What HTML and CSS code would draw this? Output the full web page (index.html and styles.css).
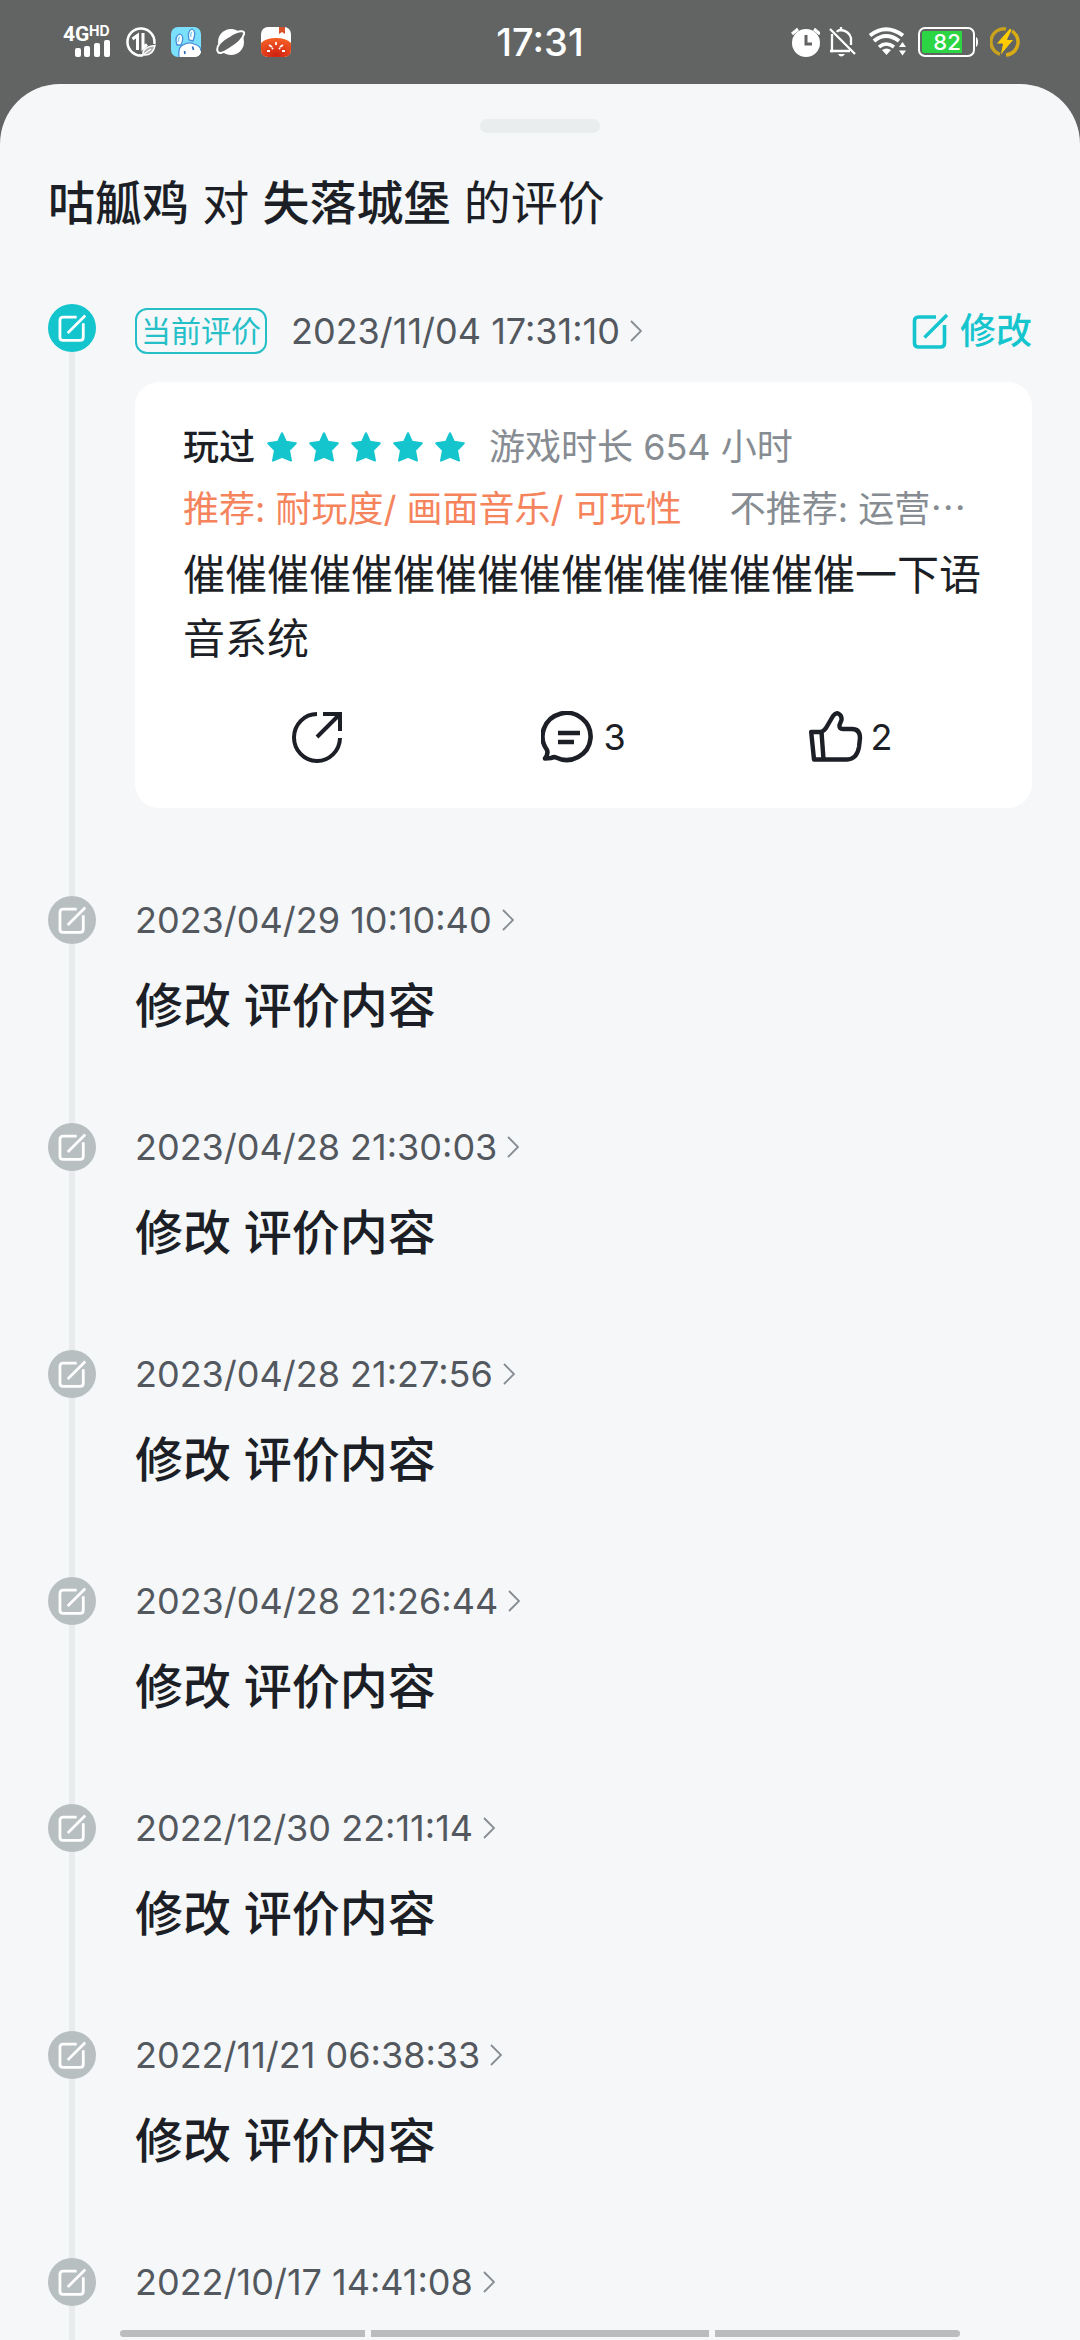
FILE: index.html
```html
<!DOCTYPE html>
<html lang="zh-CN">
<head>
    <meta charset="UTF-8">
    <meta name="viewport" content="width=device-width, initial-scale=1.0">
    <title>咕觚鸡 对 失落城堡 的评价</title>
    <link rel="stylesheet" href="styles.css">
</head>
<body>

    <!-- Shared icons -->
    <svg class="sprite" aria-hidden="true">
        <symbol id="edit" viewBox="0 0 36 36">
            <path d="M24 4H6.500Q2.500 4 2.500 8V30Q2.500 34 6.500 34H28.500Q32.500 34 32.500 30V12" fill="none" stroke="currentColor" stroke-width="3.600"/>
            <path d="M12.500 24.500 35 2" fill="none" stroke="currentColor" stroke-width="3.400"/>
        </symbol>
        <symbol id="arrow" viewBox="0 0 12 22">
            <path d="M1 1 11 11 1 21" fill="none" stroke="currentColor" stroke-width="1.800"/>
        </symbol>
        <symbol id="star" viewBox="0 0 30 30">
            <path d="M15 1.200 19 9.800 28.800 11.200 22 18.300 24 28.600 15 24.800 6 28.600 8 18.300 1.200 11.200 11 9.800Z" fill="currentColor" stroke="currentColor" stroke-width="2" stroke-linejoin="round"/>
        </symbol>
    </svg>

    <header class="status-bar">
        <div class="status-left">
            <svg width="51" height="46" viewBox="0 0 51 46" fill="#fff">
                <text class="net" x="3" y="22">4G</text>
                <text class="net-hd" x="29" y="17">HD</text>
                <rect x="15" y="29" width="6" height="9" rx="2"/>
                <rect x="24" y="27" width="6" height="11" rx="2"/>
                <rect x="34" y="24" width="6" height="14" rx="2"/>
                <rect x="44" y="21" width="6" height="17" rx="2"/>
            </svg>
            <svg width="30" height="30" viewBox="0 0 30 30" fill="none" stroke="#fff">
                <path d="M28.300 17A13.500 13.500 0 1 0 17 28.300" stroke-width="2.500"/>
                <path d="M6.500 12 11.500 8.500V23M17 6V21L21 17.500" stroke-width="3"/>
                <path d="M17 28Q16 20 29 18.500 27 29 17 28ZM18 27 25 22" fill="#aaa" stroke-width="1.500"/>
            </svg>
            <svg width="30" height="30" viewBox="0 0 30 30">
                <rect width="30" height="30" rx="7" fill="#7be0fd"/>
                <path d="M8 30Q7 21 11 18.500 17 14 23 17 30 20 30 24V25Q29 30 23 30Z" fill="#fff"/>
                <path d="M8 30Q7 21 11 18.500 17 14 23 17 30 19 30 24" fill="none" stroke="#4a8fd8" stroke-width="1.300"/>
                <path d="M6 18Q3 9 9 7 14 9 10 18ZM18 13Q16 4 21 2 26 4 22 14Z" fill="#fff" stroke="#4a8fd8" stroke-width="1.300"/>
                <path d="M7.500 15Q7 11 9 10M20 10Q19 7 21 5" fill="none" stroke="#8cd2f7" stroke-width="1.500"/>
                <path d="M13.500 24 14 27M21.500 19.500 22.500 23" stroke="#2766b8" stroke-width="1.600"/>
            </svg>
            <svg width="30" height="30" viewBox="0 0 30 30">
                <circle cx="15" cy="15" r="13" fill="#fff"/>
                <path d="M2 25C-1 20 5 13 15 8 23 3.500 29 3 28 7 27 12 20 18 13 22 7 26 3 27 2 25Z" fill="#626463" stroke="#fff" stroke-width="2"/>
            </svg>
            <svg width="30" height="30" viewBox="0 0 30 30">
                <defs>
                    <radialGradient id="tomato" cx=".5" cy=".9" r=".8">
                        <stop offset="0" stop-color="#cf2010"/>
                        <stop offset="1" stop-color="#f25a24"/>
                    </radialGradient>
                </defs>
                <rect width="30" height="30" rx="7" fill="#fff"/>
                <path d="M18 0H24V7L21 5 18 7Z" fill="#d8532b"/>
                <path d="M0 16Q5 11 15 11T30 16V23Q30 30 23 30H7Q0 30 0 23Z" fill="url(#tomato)"/>
                <path d="M15 15V18M8 18 11 20M22 18 19 20M6 24H9M24 24H21M11 21 12 22M19 21 18 22" stroke="#fff" stroke-width="1.800"/>
            </svg>
        </div>
        <span class="clock">17:31</span>
        <div class="status-right">
            <div class="alerts">
                <svg width="30" height="30" viewBox="0 0 30 30">
                    <circle cx="16" cy="16" r="14" fill="#fff"/>
                    <path d="M2 7 8 2M30 7 24 2" stroke="#fff" stroke-width="3"/>
                    <path d="M16 8V17H22" fill="none" stroke="#626463" stroke-width="3"/>
                </svg>
                <svg width="28" height="30" viewBox="0 0 28 30" fill="none" stroke="#fff" stroke-width="2.300">
                    <path d="M2 2 27 27M4 7V24H22M9 5Q10 3 13 3M13 3Q21 4 23 11V18"/>
                    <path d="M13 0V3M2 24H5"/>
                    <path d="M10 27H17Q13 32 10 27Z" fill="#fff" stroke="none"/>
                </svg>
            </div>
            <svg width="38" height="30" viewBox="0 0 38 30" fill="none" stroke="#fff">
                <path d="M2 8.500Q18 -4 35 8.500" stroke-width="4"/>
                <path d="M6 14Q18 4 31 14" stroke-width="4"/>
                <path d="M11 20Q18 14 26 20" stroke-width="3.600"/>
                <path d="M18.500 28 14 23Q18.500 20 23 23Z" fill="#fff" stroke="none"/>
                <path d="M31 20 34.500 15 38 20ZM31 23.500H38L34.500 28.500Z" fill="#fff" stroke="none"/>
            </svg>
            <svg width="60" height="30" viewBox="0 0 60 30">
                <rect x="1" y="1" width="55" height="28" rx="6" fill="none" stroke="#fff" stroke-width="2"/>
                <path d="M6 4H44V26H6Q4 26 4 24V6Q4 4 6 4Z" fill="#2bd544"/>
                <path d="M58 10Q60 11 60 15T58 20Z" fill="#fff"/>
                <text class="battery" x="29" y="23">82</text>
            </svg>
            <svg width="30" height="30" viewBox="0 0 30 30">
                <path d="M16 2A13 13 0 0 0 11 27.500" fill="none" stroke="#c9a31d" stroke-width="3.500"/>
                <path d="M20 3A13 13 0 0 1 16 28" fill="none" stroke="#d9ac16" stroke-width="3.500"/>
                <path d="M20 1 6 17H12.500L10 29 24 12.500H17.500L22 3Z" fill="#fc0" stroke="#626463" stroke-width="1"/>
            </svg>
        </div>
    </header>

    <main class="sheet">
        <div class="handle"></div>
        <h1 class="title"><b>咕觚鸡</b> 对 <b>失落城堡</b> 的评价</h1>

        <ol class="timeline">
            <li class="entry current">
                <div class="marker"><span class="dot"><svg><use href="#edit"/></svg></span></div>
                <div class="content">
                    <div class="entry-head">
                        <span class="tag">当前评价</span>
                        <a class="date" href="#"><time>2023/11/04 17:31:10</time><svg><use href="#arrow"/></svg></a>
                        <button type="button" class="modify"><svg><use href="#edit"/></svg>修改</button>
                    </div>
                    <article class="card">
                        <div class="rating">
                            <span class="played">玩过</span>
                            <span class="stars">
                                <svg><use href="#star"/></svg>
                                <svg><use href="#star"/></svg>
                                <svg><use href="#star"/></svg>
                                <svg><use href="#star"/></svg>
                                <svg><use href="#star"/></svg>
                            </span>
                            <span class="playtime">游戏时长 654 小时</span>
                        </div>
                        <div class="labels">
                            <span class="good">推荐: 耐玩度/ 画面音乐/ 可玩性</span>
                            <span class="bad">不推荐: 运营<span class="more">…</span></span>
                        </div>
                        <p class="review">催催催催催催催催催催催催催催催催一下语音系统</p>
                        <div class="actions">
                            <button type="button" aria-label="分享">
                                <svg width="52" height="52" viewBox="0 0 52 52" fill="none" stroke="currentColor" stroke-width="4">
                                    <path d="M26 3A23 23.500 0 1 0 49 27"/>
                                    <path d="M32 3H49V20M48 4 26 26"/>
                                </svg>
                            </button>
                            <button type="button" aria-label="评论">
                                <svg width="54" height="52" viewBox="0 0 54 52" fill="none" stroke="currentColor" stroke-width="4.600" stroke-linejoin="round">
                                    <path d="M6 39A24 23.500 0 1 1 15 46.500Q13 45.500 10 47L4 47.500Q7.500 43 6 39Z"/>
                                    <path d="M17 22H39M17 31H33"/>
                                </svg>
                                <span>3</span>
                            </button>
                            <button type="button" aria-label="点赞">
                                <svg width="54" height="52" viewBox="0 0 54 52" fill="none" stroke="currentColor" stroke-width="4.400" stroke-linejoin="round">
                                    <path d="M2.200 21H12Q15 20 17 17L24 5Q27 1 30 3 33 5 32.500 9L30.500 14Q30 18 34 18H43Q51 18 51 27L50 36Q48 48 38 48.500H5Z"/>
                                    <path d="M12.500 21 14.500 48.500"/>
                                </svg>
                                <span>2</span>
                            </button>
                        </div>
                    </article>
                </div>
            </li>
            <li class="entry">
                <div class="marker"><span class="dot"><svg><use href="#edit"/></svg></span></div>
                <div class="content">
                    <div class="entry-head">
                        <a class="date" href="#"><time>2023/04/29 10:10:40</time><svg><use href="#arrow"/></svg></a>
                    </div>
                    <p class="change">修改 评价内容</p>
                </div>
            </li>
            <li class="entry">
                <div class="marker"><span class="dot"><svg><use href="#edit"/></svg></span></div>
                <div class="content">
                    <div class="entry-head">
                        <a class="date" href="#"><time>2023/04/28 21:30:03</time><svg><use href="#arrow"/></svg></a>
                    </div>
                    <p class="change">修改 评价内容</p>
                </div>
            </li>
            <li class="entry">
                <div class="marker"><span class="dot"><svg><use href="#edit"/></svg></span></div>
                <div class="content">
                    <div class="entry-head">
                        <a class="date" href="#"><time>2023/04/28 21:27:56</time><svg><use href="#arrow"/></svg></a>
                    </div>
                    <p class="change">修改 评价内容</p>
                </div>
            </li>
            <li class="entry">
                <div class="marker"><span class="dot"><svg><use href="#edit"/></svg></span></div>
                <div class="content">
                    <div class="entry-head">
                        <a class="date" href="#"><time>2023/04/28 21:26:44</time><svg><use href="#arrow"/></svg></a>
                    </div>
                    <p class="change">修改 评价内容</p>
                </div>
            </li>
            <li class="entry">
                <div class="marker"><span class="dot"><svg><use href="#edit"/></svg></span></div>
                <div class="content">
                    <div class="entry-head">
                        <a class="date" href="#"><time>2022/12/30 22:11:14</time><svg><use href="#arrow"/></svg></a>
                    </div>
                    <p class="change">修改 评价内容</p>
                </div>
            </li>
            <li class="entry">
                <div class="marker"><span class="dot"><svg><use href="#edit"/></svg></span></div>
                <div class="content">
                    <div class="entry-head">
                        <a class="date" href="#"><time>2022/11/21 06:38:33</time><svg><use href="#arrow"/></svg></a>
                    </div>
                    <p class="change">修改 评价内容</p>
                </div>
            </li>
            <li class="entry">
                <div class="marker"><span class="dot"><svg><use href="#edit"/></svg></span></div>
                <div class="content">
                    <div class="entry-head">
                        <a class="date" href="#"><time>2022/10/17 14:41:08</time><svg><use href="#arrow"/></svg></a>
                    </div>
                </div>
            </li>
        </ol>
    </main>

    <div class="gesture-bar"><span></span><span></span><span></span></div>

</body>
</html>
```
FILE: styles.css
```css
* {
    box-sizing: border-box;
}

body {
    margin: 0;
    height: 100vh;
    overflow: hidden;
    display: flex;
    flex-direction: column;
    background-color: #626463;
    color: #1c1f26;
    font-family: Inter, "Noto Sans CJK SC", sans-serif;
    font-size: 36px;
    line-height: 50px;
}

h1, p, ol {
    margin: 0;
    padding: 0;
}

svg {
    display: block;
    flex: none;
}

button {
    border: none;
    padding: 0;
    background: none;
    color: inherit;
    font: inherit;
    cursor: pointer;
}

.sprite {
    display: none;
}

/* Status bar */
.status-bar {
    flex: none;
    height: 84px;
    padding: 0 60px;
    display: grid;
    grid-template-columns: 1fr auto 1fr;
    align-items: center;
    color: #ffffff;
}

.status-left {
    display: flex;
    align-items: center;
    gap: 15px;
}

.status-right {
    display: flex;
    align-items: center;
    justify-content: flex-end;
    gap: 12px;
}

.alerts {
    display: flex;
    gap: 8px;
}

.clock {
    font-size: 38px;
    font-weight: 500;
}

.net {
    font: bold 21px Roboto, sans-serif;
}

.net-hd {
    font: bold 14px Inter, sans-serif;
}

.battery {
    font: 500 22px Inter, sans-serif;
    fill: #ffffff;
    text-anchor: middle;
}

/* Sheet */
.sheet {
    flex: 1;
    min-height: 0;
    overflow: hidden;
    padding: 35px 48px 0;
    background-color: #f5f7f9;
    border-radius: 60px 60px 0 0;
}

.handle {
    width: 120px;
    height: 14px;
    margin: 0 auto;
    border-radius: 7px;
    background-color: #e9eded;
}

.title {
    margin: 34px 0 65px;
    font-size: 47px;
    line-height: 72px;
    font-weight: 400;
}

.title b {
    font-weight: 500;
}

/* Timeline */
.timeline {
    list-style: none;
}

.entry {
    display: flex;
    gap: 39px;
}

.marker {
    flex: none;
    width: 48px;
    display: flex;
    flex-direction: column;
    align-items: center;
}

.marker::after {
    content: "";
    flex: 1;
    width: 6px;
    background-color: #e9eced;
}

.dot {
    width: 48px;
    height: 48px;
    display: flex;
    align-items: center;
    justify-content: center;
    border-radius: 50%;
    background-color: #b8bfc1;
    color: #ffffff;
}

.dot svg {
    width: 28px;
    height: 28px;
}

.current .dot {
    background-color: #15c5ce;
}

.content {
    flex: 1;
    min-width: 0;
    padding-bottom: 83px;
}

.current .content {
    padding-bottom: 88px;
}

.entry-head {
    height: 48px;
    display: flex;
    align-items: center;
    gap: 24px;
}

.current .entry-head {
    height: 54px;
}

.tag {
    padding: 0 4px;
    border: 2px solid #25bfc8;
    border-radius: 12px;
    color: #25bfc8;
    font-size: 30px;
    line-height: 42px;
}

.date {
    display: flex;
    align-items: center;
    gap: 10px;
    color: #53585e;
    font-size: 36px;
    text-decoration: none;
}

.date svg {
    width: 12px;
    height: 22px;
    color: #868c92;
}

.modify {
    margin-left: auto;
    display: flex;
    align-items: center;
    gap: 12px;
    color: #15c5ce;
    font-weight: 500;
}

.modify svg {
    width: 36px;
    height: 36px;
}

.change {
    margin-top: 28px;
    font-size: 48px;
    line-height: 68px;
    font-weight: 500;
}

/* Current review */
.card {
    margin-top: 24px;
    padding: 40px 48px 45px;
    border-radius: 24px;
    background-color: #ffffff;
}

.rating {
    height: 50px;
    display: flex;
    align-items: center;
    color: #868c92;
}

.played {
    color: #1c1f26;
    font-weight: 500;
}

.stars {
    display: flex;
    gap: 12px;
    margin: 0 24px 0 12px;
    color: #15c5ce;
}

.stars svg {
    width: 30px;
    height: 30px;
}

.labels {
    margin-top: 12px;
    display: flex;
    gap: 48px;
    white-space: nowrap;
}

.good {
    color: #f5845c;
}

.bad {
    color: #868c92;
}

/* Centred dots come from the CJK face */
.more {
    font-family: "Noto Sans CJK SC", sans-serif;
    line-height: 1;
}

.review {
    margin-top: 9px;
    font-size: 42px;
    line-height: 64px;
}

.actions {
    margin-top: 40px;
    display: grid;
    grid-template-columns: repeat(3, 1fr);
}

.actions button {
    display: flex;
    align-items: center;
    justify-content: center;
    gap: 8px;
    height: 52px;
}

/* System navigation hint */
.gesture-bar {
    position: fixed;
    left: 0;
    right: 0;
    bottom: 3px;
    padding: 0 120px;
    display: grid;
    grid-template-columns: 245fr 338fr 245fr;
    gap: 6px;
}

.gesture-bar span {
    height: 7px;
    background-color: #bbbcbd;
}

.gesture-bar span:first-child {
    border-radius: 4px 0 0 4px;
}

.gesture-bar span:last-child {
    border-radius: 0 4px 4px 0;
}
```
